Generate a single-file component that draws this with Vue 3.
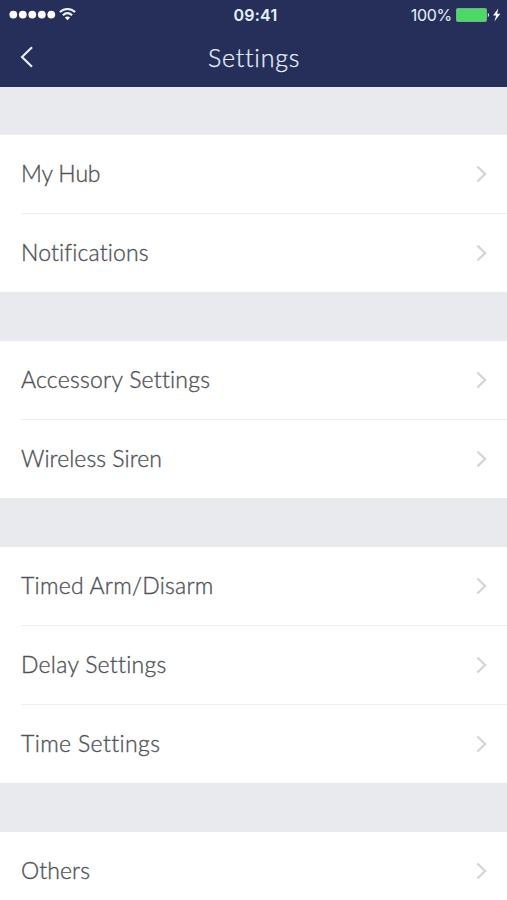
<script setup>
const groups = [
  [{ label: 'My Hub', tracking: -0.15 }, { label: 'Notifications', tracking: 0.15 }],
  [{ label: 'Accessory Settings', tracking: 0.24 }, { label: 'Wireless Siren', tracking: 0.06 }],
  [
    { label: 'Timed Arm/Disarm', tracking: 0.25 },
    { label: 'Delay Settings', tracking: 0.27 },
    { label: 'Time Settings', tracking: 0.38 },
  ],
  [{ label: 'Others', tracking: 0.1 }],
]
</script>

<template>
  <div class="screen">
    <header class="header">
      <div class="status">
        <div class="signal">
          <svg class="dots" width="47" height="10" viewBox="0 0 47 10" fill="#fff">
            <circle v-for="n in 5" :key="n" :cx="4.3 + (n - 1) * 9.5" cy="4.6" r="3.9" />
          </svg>
          <svg class="wifi" width="18" height="14" viewBox="0 0 18 14">
            <g fill="none" stroke="#eef5fc" stroke-width="2.1">
              <path d="M0.9 5.1C5.4.9 11.6.9 16.1 5.1" />
              <path d="M3.9 8.3C6.7 5.7 10.3 5.7 13.1 8.3" />
            </g>
            <path d="M5.9 10.6C7.4 9.2 9.6 9.2 11.1 10.6L8.5 13.2Z" fill="#fff" />
          </svg>
        </div>
        <div class="clock">09:41</div>
        <div class="power">
          <span class="percent">100%</span>
          <svg class="battery" width="46" height="16" viewBox="0 0 46 16">
            <rect x="0.5" y="1.5" width="30" height="13" rx="1" fill="#4cd964" stroke="#84b99b" stroke-width="0.8" />
            <path d="M31.8 6C33.4 6.3 33.4 9.7 31.8 10Z" fill="#e9f2f8" />
            <path d="M42.3 1.6L37 8.6H40.2L38.4 14.4L44.3 6.8H41.1Z" fill="#fff" />
          </svg>
        </div>
      </div>
      <div class="nav">
        <svg class="back" width="14" height="22" viewBox="0 0 14 22" fill="none" stroke="#e6f2fa" stroke-width="2.1">
          <path d="M12 1.2L2 11L12 20.8" />
        </svg>
        <h1 class="title">Settings</h1>
      </div>
    </header>
    <main class="groups">
      <ul v-for="(group, i) in groups" :key="i" class="group">
        <li v-for="item in group" :key="item.label" class="row">
          <span class="label" :style="{ letterSpacing: item.tracking + 'px' }">{{ item.label }}</span>
          <svg class="chevron" width="12" height="18" viewBox="0 0 12 18" fill="none" stroke="#d3d5d8" stroke-width="2.3">
            <path d="M2.4 1.5L10.1 9L2.4 16.5" />
          </svg>
        </li>
      </ul>
    </main>
  </div>
</template>

<style>
body {
  margin: 0;
  background: #e9eaee;
}
</style>

<style scoped>
.screen {
  height: 900px;
  overflow: hidden;
  background: #e9eaee;
  font-family: Lato, "Liberation Sans", sans-serif;
}
.header {
  height: 87px;
  background: #262f5a;
  color: #e6f2fa;
}
.status {
  display: grid;
  grid-template-columns: 1fr auto 1fr;
  align-items: center;
  height: 30px;
  padding: 0 5px 0 9px;
  font-family: Inter, sans-serif;
}
.signal {
  display: flex;
  align-items: center;
  gap: 3px;
}
.wifi {
  margin-top: -2px;
}
.clock {
  font-size: 16px;
  font-weight: 600;
  letter-spacing: 0.2px;
}
.power {
  display: flex;
  align-items: center;
  justify-content: flex-end;
  gap: 4px;
}
.percent {
  font-size: 16px;
  letter-spacing: -0.3px;
}
.nav {
  display: grid;
  grid-template-columns: 40px 1fr 40px;
  align-items: center;
  height: 54px;
  padding: 0 20px;
}
.title {
  grid-column: 2;
  margin: 0;
  padding: 0 0 1px 1px;
  text-align: center;
  font-size: 25px;
  line-height: 30px;
  font-weight: 300;
  letter-spacing: 0.75px;
  -webkit-text-stroke: 0.25px currentColor;
}
.groups {
  display: flex;
  flex-direction: column;
  gap: 49px;
  padding-top: 48px;
}
.group {
  margin: 0;
  padding: 0 0 0 21px;
  list-style: none;
  background: #fff;
}
.row {
  display: flex;
  align-items: center;
  justify-content: space-between;
  height: 78px;
  padding-right: 20px;
  color: #505257;
}
.row + .row {
  border-top: 1px solid #eeeff1;
}
.label {
  padding-bottom: 2px;
  font-size: 23px;
  line-height: 30px;
  font-weight: 300;
  white-space: nowrap;
  -webkit-text-stroke: 0.35px currentColor;
}
</style>
